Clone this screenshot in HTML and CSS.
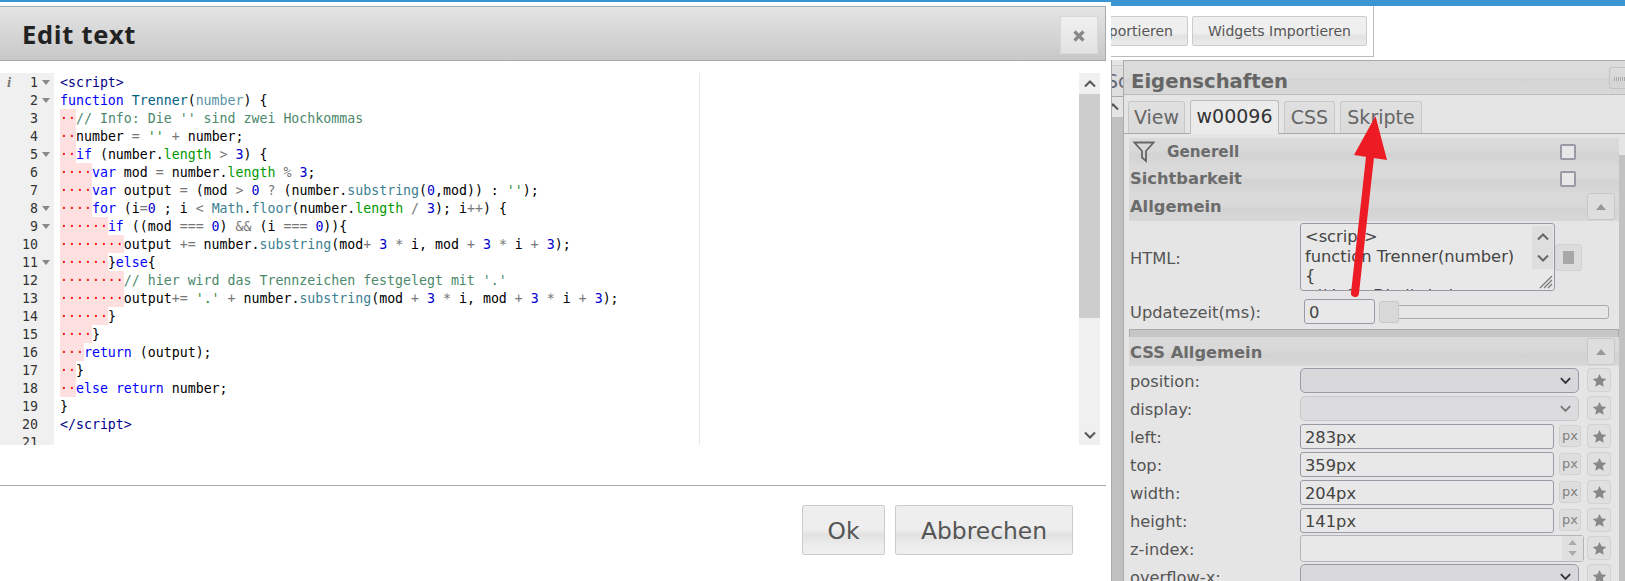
FILE: index.html
```html
<!DOCTYPE html>
<html lang="de">
<head>
<meta charset="utf-8">
<title>Edit text</title>
<link rel="stylesheet" href="styles.css">
</head>
<body>
<svg class="defs" width="0" height="0" aria-hidden="true">
  <symbol id="star" viewBox="0 0 16 16"><path d="M8 1l2.2 4.7 5 .6-3.7 3.4 1 5L8 12.2 3.500 14.700l1-5L.8 6.300l5-.6z"/></symbol>
  <symbol id="chev-down" viewBox="0 0 14 14"><path d="M2 4.500l5 5 5-5" fill="none" stroke="currentColor" stroke-width="2"/></symbol>
  <symbol id="chev-up" viewBox="0 0 14 14"><path d="M2 9.500l5-5 5 5" fill="none" stroke="currentColor" stroke-width="2"/></symbol>
  <symbol id="tri-up" viewBox="0 0 10 6"><path d="M5 0l5 6H0z"/></symbol>
</svg>

<div class="topbar"></div>

<div class="toolbar">
  <button class="tool-btn tool-hidden">Views Importieren</button>
  <button class="tool-btn tool-wide">Widgets Importieren</button>
</div>

<div class="workspace">
  <div class="mini">
    <div class="mini-tab"><span>Sc</span></div>
    <div class="mini-up"><svg class="mini-chev"><use href="#chev-up"/></svg></div>
    <div class="mini-track"></div>
  </div>
  <div class="props">
    <div class="props-head">
      <span class="props-title">Eigenschaften</span>
      <span class="grip"></span>
    </div>
    <div class="tabs">
      <span class="tab tab-view">View</span>
      <span class="tab tab-active">w00096</span>
      <span class="tab tab-css">CSS</span>
      <span class="tab tab-skr">Skripte</span>
    </div>
    <div class="props-body">
      <div class="acc">
        <div class="sec sec-filter">
          <svg class="funnel" viewBox="0 0 22 22"><path d="M1.500 1.500h19l-7.500 8.500v10l-4-3.500v-6.500z" fill="none" stroke="#666" stroke-width="1.800"/></svg>
          <span class="sec-name sec-gen">Generell</span>
          <span class="check"></span>
        </div>
        <div class="sec sec-plain">
          <span class="sec-name">Sichtbarkeit</span>
          <span class="check"></span>
        </div>
        <div class="sec sec-tall">
          <span class="sec-name">Allgemein</span>
          <span class="collapse"><svg class="tri"><use href="#tri-up"/></svg></span>
        </div>
        <div class="row row-html">
          <span class="label">HTML:</span>
          <div class="area">
            <div class="area-text">&lt;script&gt;<br>function Trenner(number)<br>{<br>&nbsp;&nbsp;// Info: Die '' sind</div>
            <div class="area-scroll">
              <svg class="area-chev"><use href="#chev-up"/></svg>
              <svg class="area-chev"><use href="#chev-down"/></svg>
            </div>
            <svg class="resize" viewBox="0 0 16 16"><path d="M15 3L3 15M15 7l-8 8M15 11l-4 4" stroke="#777" stroke-width="1.200" fill="none"/></svg>
          </div>
          <span class="edit-btn"><i></i></span>
        </div>
        <div class="row row-upd">
          <span class="label">Updatezeit(ms):</span>
          <span class="input input-upd">0</span>
          <div class="slider"><span class="knob"></span></div>
        </div>
        <div class="divider"></div>
        <div class="sec sec-css">
          <span class="sec-name">CSS Allgemein</span>
          <span class="collapse"><svg class="tri"><use href="#tri-up"/></svg></span>
        </div>
        <div class="row">
          <span class="label">position:</span>
          <span class="select"><svg class="sel-chev"><use href="#chev-down"/></svg></span>
          <span class="star"><svg><use href="#star"/></svg></span>
        </div>
        <div class="row">
          <span class="label">display:</span>
          <span class="select select-off"><svg class="sel-chev"><use href="#chev-down"/></svg></span>
          <span class="star"><svg><use href="#star"/></svg></span>
        </div>
        <div class="row">
          <span class="label">left:</span>
          <span class="input">283px</span>
          <span class="unit">px</span>
          <span class="star"><svg><use href="#star"/></svg></span>
        </div>
        <div class="row">
          <span class="label">top:</span>
          <span class="input">359px</span>
          <span class="unit">px</span>
          <span class="star"><svg><use href="#star"/></svg></span>
        </div>
        <div class="row">
          <span class="label">width:</span>
          <span class="input">204px</span>
          <span class="unit">px</span>
          <span class="star"><svg><use href="#star"/></svg></span>
        </div>
        <div class="row">
          <span class="label">height:</span>
          <span class="input">141px</span>
          <span class="unit">px</span>
          <span class="star"><svg><use href="#star"/></svg></span>
        </div>
        <div class="row">
          <span class="label">z-index:</span>
          <span class="spin">
            <span class="spin-arrows">
              <svg class="spin-tri"><use href="#tri-up"/></svg>
              <svg class="spin-tri spin-tri-down"><use href="#tri-up"/></svg>
            </span>
          </span>
          <span class="star"><svg><use href="#star"/></svg></span>
        </div>
        <div class="row">
          <span class="label">overflow-x:</span>
          <span class="select"><svg class="sel-chev"><use href="#chev-down"/></svg></span>
          <span class="star"><svg><use href="#star"/></svg></span>
        </div>
      </div>
      <div class="vscroll">
        <div class="vscroll-up"></div>
      </div>
    </div>
  </div>
</div>

<div class="dialog">
  <div class="dlg-head">
    <span class="dlg-title">Edit text</span>
    <span class="dlg-close">
      <svg viewBox="0 0 12 12" width="12" height="12"><path d="M1.500 1.500l9 9M10.500 1.500l-9 9" stroke="#888" stroke-width="3.200" fill="none"/></svg>
    </span>
  </div>
  <div class="editor">
    <div class="gutter">
      <span class="gut"><b class="info">i</b>1<i class="fold"></i></span>
      <span class="gut">2<i class="fold"></i></span>
      <span class="gut">3</span>
      <span class="gut">4</span>
      <span class="gut">5<i class="fold"></i></span>
      <span class="gut">6</span>
      <span class="gut">7</span>
      <span class="gut">8<i class="fold"></i></span>
      <span class="gut">9<i class="fold"></i></span>
      <span class="gut">10</span>
      <span class="gut">11<i class="fold"></i></span>
      <span class="gut">12</span>
      <span class="gut">13</span>
      <span class="gut">14</span>
      <span class="gut">15</span>
      <span class="gut">16</span>
      <span class="gut">17</span>
      <span class="gut">18</span>
      <span class="gut">19</span>
      <span class="gut">20</span>
      <span class="gut">21</span>
    </div>
    <div class="code">
<div class="ln"><span class="tag">&lt;script&gt;</span></div>
<div class="ln"><span class="kw">function</span> <span class="fn">Trenner</span>(<span class="par">number</span>) {</div>
<div class="ln"><span class="ws">··</span><span class="cm">// Info: Die '' sind zwei Hochkommas</span></div>
<div class="ln"><span class="ws">··</span>number <span class="op">=</span> <span class="str">''</span> <span class="op">+</span> number;</div>
<div class="ln"><span class="ws">··</span><span class="kw">if</span> (number.<span class="prop">length</span> <span class="op">&gt;</span> <span class="num">3</span>) {</div>
<div class="ln"><span class="ws">····</span><span class="kw">var</span> mod <span class="op">=</span> number.<span class="prop">length</span> <span class="op">%</span> <span class="num">3</span>;</div>
<div class="ln"><span class="ws">····</span><span class="kw">var</span> output <span class="op">=</span> (mod <span class="op">&gt;</span> <span class="num">0</span> <span class="op">?</span> (number.<span class="sup">substring</span>(<span class="num">0</span>,mod)) : <span class="str">''</span>);</div>
<div class="ln"><span class="ws">····</span><span class="kw">for</span> (i<span class="op">=</span><span class="num">0</span> ; i <span class="op">&lt;</span> <span class="sup">Math</span>.<span class="sup">floor</span>(number.<span class="prop">length</span> <span class="op">/</span> <span class="num">3</span>); i<span class="op">++</span>) {</div>
<div class="ln"><span class="ws">······</span><span class="kw">if</span> ((mod <span class="op">===</span> <span class="num">0</span>) <span class="op">&amp;&amp;</span> (i <span class="op">===</span> <span class="num">0</span>)){</div>
<div class="ln"><span class="ws">········</span>output <span class="op">+=</span> number.<span class="sup">substring</span>(mod<span class="op">+</span> <span class="num">3</span> <span class="op">*</span> i, mod <span class="op">+</span> <span class="num">3</span> <span class="op">*</span> i <span class="op">+</span> <span class="num">3</span>);</div>
<div class="ln"><span class="ws">······</span>}<span class="kw">else</span>{</div>
<div class="ln"><span class="ws">········</span><span class="cm">// hier wird das Trennzeichen festgelegt mit '.'</span></div>
<div class="ln"><span class="ws">········</span>output<span class="op">+=</span> <span class="str">'.'</span> <span class="op">+</span> number.<span class="sup">substring</span>(mod <span class="op">+</span> <span class="num">3</span> <span class="op">*</span> i, mod <span class="op">+</span> <span class="num">3</span> <span class="op">*</span> i <span class="op">+</span> <span class="num">3</span>);</div>
<div class="ln"><span class="ws">······</span>}</div>
<div class="ln"><span class="ws">····</span>}</div>
<div class="ln"><span class="ws">···</span><span class="kw">return</span> (output);</div>
<div class="ln"><span class="ws">··</span>}</div>
<div class="ln"><span class="ws">··</span><span class="kw">else</span> <span class="kw">return</span> number;</div>
<div class="ln">}</div>
<div class="ln"><span class="tag">&lt;/script&gt;</span></div>
    </div>
    <div class="code-rest"></div>
    <div class="ed-scroll">
      <div class="ed-btn"><svg class="ed-chev"><use href="#chev-up"/></svg></div>
      <div class="ed-thumb"></div>
      <div class="ed-track"></div>
      <div class="ed-btn"><svg class="ed-chev"><use href="#chev-down"/></svg></div>
    </div>
  </div>
  <div class="dlg-foot">
    <button class="dlg-btn btn-ok">Ok</button>
    <button class="dlg-btn btn-cancel">Abbrechen</button>
  </div>
</div>

<svg class="arrow" viewBox="0 0 1625 581" aria-hidden="true">
  <path d="M1355 293L1370 157" stroke="#ed1c24" stroke-width="8" stroke-linecap="round" fill="none"/>
  <path d="M1375.500 116L1387 160L1354 155z" fill="#ed1c24"/>
</svg>
</body>
</html>
```

FILE: styles.css
```css
* { box-sizing: border-box; }
html, body { margin: 0; padding: 0; }
body {
  position: relative;
  width: 1625px;
  height: 581px;
  overflow: hidden;
  background: #fff;
  font-family: "DejaVu Sans", sans-serif;
  color: #555;
}
.defs { position: absolute; }

.topbar { height: 6px; background: #3a96d2; }

/* toolbar */
.toolbar {
  width: 1374px;
  height: 51px;
  background: #fff;
  border-right: 1px solid #bbb;
  border-bottom: 1px solid #bbb;
  display: flex;
  justify-content: flex-end;
  gap: 4px;
  padding: 10px 6px 0 0;
  align-items: flex-start;
}
.tool-btn {
  height: 30px;
  border: 1px solid #ccc;
  border-radius: 2px;
  background: linear-gradient(#efefef 0, #efefef 55%, #e2e2e2 70%, #ececec 100%);
  font: 14px "DejaVu Sans", sans-serif;
  color: #555;
  white-space: nowrap;
}
.tool-hidden { padding: 0 14px; }
.tool-wide { width: 175px; padding: 0; }

/* side panels */
.workspace {
  margin: 3px 0 0 1111px;
  height: 521px;
  display: flex;
  border-left: 1px solid #aaa;
}
.mini {
  width: 12px;
  flex: none;
  background: #e4e4e4;
  display: flex;
  flex-direction: column;
  border-right: 1px solid #aaa;
  overflow: hidden;
  padding-top: 5px;
}
.mini-tab {
  height: 32px;
  flex: none;
  border-top: 1px solid #ccc;
  border-bottom: 1px solid #aaa;
  background: #dedede;
  overflow: hidden;
  font-size: 19px;
  line-height: 30px;
  color: #667;
  white-space: nowrap;
}
.mini-tab span { display: block; margin-left: -6px; }
.mini-up { height: 20px; flex: none; background: #e4e4e4; overflow: hidden; }
.mini-chev { display: block; width: 14px; height: 14px; margin: 3px 0 0 -6px; color: #555; }
.mini-track { flex: 1; background: #c0c0c0; }

.props { flex: 1; min-width: 0; background: #e5e5e5; display: flex; flex-direction: column; }
.props-head {
  height: 35px;
  flex: none;
  border-top: 1px solid #aaa;
  border-bottom: 1px solid #bbb;
  background: linear-gradient(#dcdcdc 0, #dadada 50%, #d4d4d4 55%, #d8d8d8 100%);
  display: flex;
  align-items: center;
  justify-content: space-between;
  padding-left: 7px;
}
.props-title { font-size: 19.6px; font-weight: 700; color: #666; padding-top: 7px; }
.grip {
  width: 16px;
  height: 22px;
  border: 1px solid #c4c4c4;
  border-right: 0;
  border-radius: 3px 0 0 3px;
  background: repeating-linear-gradient(90deg, #aaa 0 1px, #dadada 1px 2px) 4px 9px / 12px 4px no-repeat;
}
.tabs {
  height: 39px;
  flex: none;
  border-bottom: 1px solid #aaa;
  display: flex;
  align-items: flex-end;
  padding: 0 0 0 4px;
}
.tab {
  height: 32px;
  margin-right: 5px;
  font-size: 19px;
  line-height: 30px;
  color: #666;
  text-align: center;
  background: linear-gradient(#e0e0e0, #dadada);
  border: 1px solid #c8c8c8;
  border-bottom: 0;
  border-radius: 3px 3px 0 0;
}
.tab-view { width: 57px; }
.tab-active { width: 89px; height: 34px; margin-bottom: -1px; background: #ebebeb; color: #333; border-color: #bbb; }
.tab-css { width: 51px; }
.tab-skr { width: 82px; }

.props-body { flex: 1; min-height: 0; display: flex; padding-left: 5px; overflow: hidden; }
.acc { flex: 1; min-width: 0; padding-top: 4px; }
.vscroll { width: 6px; flex: none; background: #c2c2c2; }
.vscroll-up { height: 21px; background: #e5e5e5; }

.sec {
  display: flex;
  align-items: center;
  background: linear-gradient(#dadada 0, #d9d9d9 45%, #d3d3d3 60%, #d8d8d8 100%);
  padding-left: 1px;
}
.sec-name { font-size: 16.3px; font-weight: 700; color: #6b6b6b; white-space: nowrap; }
.sec-filter { height: 27px; padding-left: 4px; }
.sec-plain { height: 27px; }
.sec-tall { height: 29px; justify-content: space-between; padding-right: 4px; }
.sec-css { height: 29px; justify-content: space-between; padding-right: 4px; }
.sec-css .sec-name { padding-top: 2px; }
.funnel { width: 22px; height: 22px; flex: none; margin-right: 12px; }
.sec-gen { font-size: 15.2px; }
.check {
  width: 16px;
  height: 16px;
  margin-left: auto;
  margin-right: 43px;
  border: 2px solid #9a9aa6;
  border-radius: 2px;
  background: #e8e8e8;
}
.collapse {
  width: 28px;
  height: 27px;
  display: flex;
  align-items: center;
  justify-content: center;
  border: 1px solid #c8c8c8;
  border-radius: 3px;
  background: #dedede;
}
.tri { width: 10px; height: 6px; fill: #999; }

.row {
  height: 28px;
  display: flex;
  align-items: center;
  padding-left: 1px;
}
.label { width: 170px; flex: none; padding-top: 2px; font-size: 16.3px; color: #555; white-space: nowrap; }
.row-html { height: 73px; align-items: flex-start; padding-top: 2px; }
.row-html .label { padding-top: 0; line-height: 72px; }
.row-upd { height: 33px; padding-top: 2px; }
.row-upd .label { width: 174px; }

.area {
  width: 255px;
  height: 68px;
  flex: none;
  position: relative;
  overflow: hidden;
  border: 1px solid #9a9aa6;
  border-radius: 3px;
  background: #e8e8e8;
  padding: 3px 0 0 4px;
  font-size: 16.3px;
  line-height: 19.5px;
  color: #444;
  white-space: nowrap;
}
.area-scroll {
  position: absolute;
  top: 2px;
  right: 1px;
  width: 21px;
  height: 43px;
  background: #dedede;
  display: flex;
  flex-direction: column;
  align-items: center;
  justify-content: space-around;
}
.area-chev { width: 14px; height: 14px; color: #666; }
.resize { position: absolute; right: 1px; bottom: 1px; width: 16px; height: 16px; }
.edit-btn {
  width: 27px;
  height: 27px;
  flex: none;
  margin-top: 21px;
  border-radius: 3px;
  background: #dcdcdc;
  border: 1px solid #d2d2d2;
  display: flex;
  align-items: center;
  justify-content: center;
}
.edit-btn i { width: 11px; height: 13px; background: #a8a8a8; }

.input {
  width: 254px;
  height: 25px;
  flex: none;
  border: 1px solid #9a9aa6;
  border-radius: 3px;
  background: #e8e8e8;
  padding: 1px 0 0 4px;
  font-size: 16.3px;
  line-height: 23px;
  color: #444;
}
.input-upd { width: 71px; }
.slider {
  width: 230px;
  height: 14px;
  flex: none;
  margin-left: 4px;
  border: 1px solid #aaa;
  border-radius: 3px;
  background: #e6e6e6;
  position: relative;
}
.knob {
  position: absolute;
  left: -1px;
  top: -5px;
  width: 20px;
  height: 22px;
  border: 1px solid #c8c8c8;
  border-radius: 3px;
  background: #d8d8d8;
}
.divider {
  height: 8px;
  margin: 2px 0 0;
  background: #c6c6c6;
  border: 1px solid #aaa;
  border-bottom: 0;
}
.select {
  width: 279px;
  height: 25px;
  flex: none;
  display: flex;
  align-items: center;
  justify-content: flex-end;
  border: 1px solid #9a9aa6;
  border-radius: 5px;
  background: #d8d8db;
  padding-right: 6px;
  color: #333;
}
.sel-chev { width: 13px; height: 13px; }
.select-off { background: #dcdcde; border-color: #c8c8cc; color: #777; }
.star {
  width: 24px;
  height: 24px;
  flex: none;
  margin-left: 8px;
  border: 1px solid #d2d2d2;
  border-radius: 3px;
  background: #e0e0e0;
  display: flex;
  align-items: center;
  justify-content: center;
}
.star svg { width: 15px; height: 15px; fill: #888; }
.unit {
  width: 22px;
  height: 22px;
  flex: none;
  margin-left: 5px;
  border: 1px solid #d2d2d2;
  border-radius: 3px;
  background: #dedede;
  font-size: 13px;
  line-height: 20px;
  text-align: center;
  color: #808080;
}
.unit + .star { margin-left: 6px; }
.spin {
  width: 284px;
  height: 27px;
  flex: none;
  margin-right: -5px;
  border: 1px solid #b4b4ba;
  border-radius: 3px;
  background: #e8e8e8;
  display: flex;
  justify-content: flex-end;
}
.spin-arrows {
  width: 21px;
  background: #e0e0e0;
  display: flex;
  flex-direction: column;
  align-items: center;
  justify-content: center;
  gap: 6px;
}
.spin-tri { width: 9px; height: 5px; fill: #aaa; }
.spin-tri-down { transform: rotate(180deg); }

/* dialog */
.dialog {
  position: absolute;
  left: 0;
  top: 2px;
  width: 1111px;
  height: 579px;
  background: #fff;
  padding: 4px 0 0;
  display: flex;
  flex-direction: column;
}
.dlg-head {
  height: 55px;
  flex: none;
  margin-right: 5px;
  border-top: 1px solid #aaa;
  border-right: 1px solid #aaa;
  border-bottom: 1px solid #aaa;
  background: linear-gradient(#e4e4e4, #c8c8c8);
  display: flex;
  align-items: center;
  justify-content: space-between;
  padding: 0 7px 0 22px;
}
.dlg-title { font-family: "Open Sans", sans-serif; font-size: 25.5px; font-weight: 700; letter-spacing: .7px; color: #222; }
.dlg-close {
  width: 38px;
  height: 38px;
  margin-top: 3px;
  padding-top: 2px;
  background: linear-gradient(#f0f0f0, #e2e2e2);
  border: 1px solid #d8d8d8;
  display: flex;
  align-items: center;
  justify-content: center;
}
.editor {
  height: 372px;
  flex: none;
  margin: 12px 11px 0 0;
  display: flex;
  overflow: hidden;
  font-family: "DejaVu Sans Mono", monospace;
  font-size: 13.25px;
  line-height: 20px;
}
.gutter {
  width: 54px;
  flex: none;
  background: #f0f0f0;
  color: #333;
  display: flex;
  flex-direction: column;
}
.gut {
  height: 18px;
  flex: none;
  padding-right: 16px;
  text-align: right;
  position: relative;
}
.info {
  position: absolute;
  left: 7px;
  top: -1px;
  font-family: "Liberation Serif", serif;
  font-size: 15px;
  font-style: italic;
  color: #777;
}
.fold {
  position: absolute;
  left: 42px;
  top: 7px;
  width: 0;
  height: 0;
  border: 4px solid transparent;
  border-top: 5px solid #888;
  border-bottom: 0;
}
.code {
  width: 646px;
  flex: none;
  border-right: 1px solid #e8e8e8;
  padding-left: 6px;
  color: #000;
}
.ln { height: 18px; white-space: pre; }
.code-rest { flex: 1; }
.ws { display: inline-block; height: 18px; vertical-align: top; background: #ffe0e0; color: #f00000; }
.kw { color: #0000ff; }
.tag { color: #000088; }
.fn { color: #00607f; }
.par { color: #5b93a6; }
.cm { color: #4c886b; }
.op { color: #777; }
.str { color: #2f8a3a; }
.num { color: #0000cd; }
.prop { color: #009900; }
.sup { color: #3d7f92; }
.ed-scroll { width: 21px; flex: none; display: flex; flex-direction: column; background: #f0f0f0; }
.ed-btn { height: 21px; flex: none; display: flex; align-items: center; justify-content: center; color: #555; }
.ed-chev { width: 14px; height: 14px; }
.ed-thumb { height: 224px; flex: none; background: #cdcdcd; }
.ed-track { flex: 1; }
.dlg-foot {
  margin-top: 40px;
  margin-right: 5px;
  border-top: 1px solid #aaa;
  padding: 19px 33px 0 0;
  display: flex;
  justify-content: flex-end;
  gap: 10px;
}
.dlg-btn {
  height: 50px;
  padding: 2px 0 0;
  border: 1px solid #ccc;
  border-radius: 2px;
  background: linear-gradient(#eee 0, #eee 48%, #e2e2e2 60%, #eee 85%);
  font: 23.4px "DejaVu Sans", sans-serif;
  color: #555;
}
.btn-ok { width: 83px; }
.btn-cancel { width: 178px; }

.arrow { position: absolute; left: 0; top: 0; width: 1625px; height: 581px; pointer-events: none; }
```
